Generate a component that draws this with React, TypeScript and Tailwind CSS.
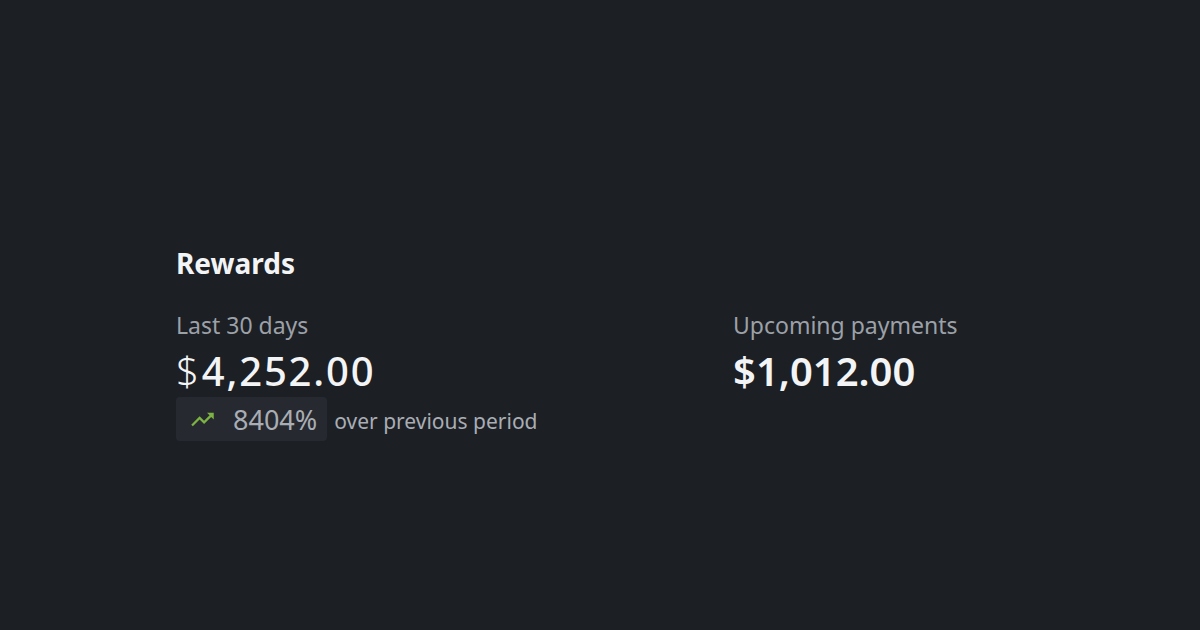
import React from "react";

function TrendUp() {
  return (
    <svg width="27" height="27" viewBox="0 0 24 24" className="text-[#7cb342]" fill="currentColor">
      <path d="M16 6l2.29 2.29-4.88 4.88-4-4L2 16.59 3.41 18l6-6 4 4 6.3-6.29L22 12V6z" />
    </svg>
  );
}

export default function App() {
  return (
    <div
      className="w-[1200px] h-[630px] bg-[#1c1f24] text-[#f3f4f6] flex flex-col pl-[176px] pt-[249px]"
      style={{ fontFamily: '"Noto Sans", "Open Sans", sans-serif' }}
    >
      <h2 className="text-[28px] font-bold leading-none mb-[37px]">Rewards</h2>
      <div className="grid grid-cols-[557px_1fr]">
        <div className="flex flex-col items-start">
          <div className="text-[23px] text-[#9ca1a8] leading-none">Last 30 days</div>
          <div className="text-[40px] leading-none mt-[14px] flex items-baseline">
            <span className="font-light">$</span>
            <span className="ml-[3px] font-medium tracking-[1.8px]">4,252.00</span>
          </div>
          <div className="flex items-center mt-[6px]">
            <div className="flex items-center gap-[17px] bg-[#262930] rounded-[4px] h-[44px] pl-[13px] pr-[10px]">
              <TrendUp />
              <span className="text-[27px] text-[#a9adb4] leading-none">8404%</span>
            </div>
            <span className="text-[21px] text-[#a9adb4] ml-[7px] mt-[6px]">over previous period</span>
          </div>
        </div>
        <div className="flex flex-col items-start">
          <div className="text-[23px] text-[#9ca1a8] leading-none">Upcoming payments</div>
          <div className="text-[40px] font-semibold leading-none mt-[14px]">$1,012.00</div>
        </div>
      </div>
    </div>
  );
}
